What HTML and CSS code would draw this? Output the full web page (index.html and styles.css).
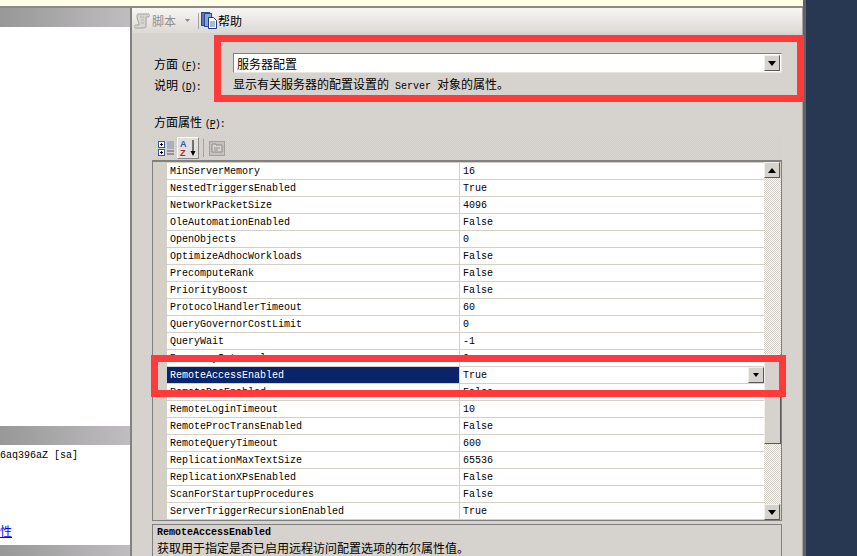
FILE: index.html
```html
<!DOCTYPE html>
<html lang="zh">
<head>
<meta charset="utf-8">
<title>方面属性</title>
<link rel="stylesheet" href="styles.css">
</head>
<body>
<div class="window">
  <div class="content">
    <div class="strip"></div>
    <div class="panes">
      <aside class="left">
        <div class="band band-top"></div>
        <div class="white white-a"></div>
        <div class="band band-mid"></div>
        <div class="white white-b">
          <div class="login">6aq396aZ [sa]</div>
          <a class="link" href="#">性</a>
        </div>
        <div class="band band-end"></div>
      </aside>
      <main class="right">
        <div class="toolbar">
          <svg class="ico-script" width="17" height="16" viewBox="0 0 17 16"><path d="M4 1h10c2 0 2 3 0 3h-2v9c0 2-1 2-2 2H2c-2 0-2-3 0-3h3v-1c0-2-2-4-2-7 0-2 0-3 1-3z" fill="#d8d6d2" stroke="#a4a29e"/><path d="M6 4h4M7 7h3M7 10h3" stroke="#b4b2ae"/></svg>
          <span class="tb-dim">脚本</span>
          <svg class="ico-drop" width="5" height="3" viewBox="0 0 5 3"><path d="M0 0h5L2.500 3z" fill="#8a8a8a"/></svg>
          <span class="tb-sep"></span>
          <svg class="ico-help" width="17" height="17" viewBox="0 0 17 17"><rect x="0.500" y="0.500" width="8" height="13" fill="#5a74b8" stroke="#2e4a8e"/><rect x="3.500" y="1.500" width="7" height="13" fill="#8aa2d8" stroke="#2e4a8e"/><path d="M7.500 5.500h5l3 3v8h-8z" fill="#fff" stroke="#1f3a7a"/><path d="M9 10h5M9 12h5M9 14h5" stroke="#5a74b8"/></svg>
          <span class="tb-text">帮助</span>
        </div>
        <section class="facet">
          <div class="facet-labels">
            <div class="lbl">方面 <span class="lat lat-tight">(<u>F</u>):</span></div>
            <div class="lbl">说明 <span class="lat lat-tight">(<u>D</u>):</span></div>
          </div>
          <div class="facet-fields">
            <div class="combo">
              <span class="combo-text">服务器配置</span>
              <span class="btn btn-combo"><i class="tri-down"></i></span>
            </div>
            <div class="desc">显示有关服务器的配置设置的<span class="lat"> Server </span>对象的属性。</div>
          </div>
        </section>
        <div class="props-label">方面属性 <span class="lat lat-tight">(<u>P</u>):</span></div>
        <div class="grid-tools">
          <svg class="tool" width="18" height="18" viewBox="0 0 18 18"><rect x="1.500" y="2.500" width="6" height="6" fill="#fff" stroke="#3c5a9a"/><path d="M3 5.500h3M4.500 4v3" stroke="#000"/><rect x="1.500" y="10.500" width="6" height="6" fill="#fff" stroke="#3c5a9a"/><path d="M3 13.500h3M4.500 12v3" stroke="#000"/><path d="M10 3h7M10 5h7M10 7h7M10 9h7" stroke="#7f8fb8"/><path d="M10 12h7M10 15h7" stroke="#555"/></svg>
          <span class="tool-on"><svg width="20" height="20" viewBox="0 0 20 20"><text class="az az-a" x="2" y="9">A</text><text class="az az-z" x="2" y="18">Z</text><path d="M15 2v13" stroke="#000"/><path d="M12.500 13h5L15 18z" fill="#000"/></svg></span>
          <span class="tool-sep"></span>
          <svg class="tool" width="16" height="16" viewBox="0 0 16 16"><rect x="0.500" y="1.500" width="15" height="14" fill="#c4c2be" stroke="#a2a09c"/><path d="M3 6V4h4v1h6v7H3z" fill="#d8d6d2" stroke="#8e8c88"/><path d="M5 8h6M5 10h4" stroke="#8e8c88"/></svg>
        </div>
        <div class="grid">
          <div class="rows">
            <div class="row"><span class="name">MinServerMemory</span><span class="val">16</span></div>
            <div class="row"><span class="name">NestedTriggersEnabled</span><span class="val">True</span></div>
            <div class="row"><span class="name">NetworkPacketSize</span><span class="val">4096</span></div>
            <div class="row"><span class="name">OleAutomationEnabled</span><span class="val">False</span></div>
            <div class="row"><span class="name">OpenObjects</span><span class="val">0</span></div>
            <div class="row"><span class="name">OptimizeAdhocWorkloads</span><span class="val">False</span></div>
            <div class="row"><span class="name">PrecomputeRank</span><span class="val">False</span></div>
            <div class="row"><span class="name">PriorityBoost</span><span class="val">False</span></div>
            <div class="row"><span class="name">ProtocolHandlerTimeout</span><span class="val">60</span></div>
            <div class="row"><span class="name">QueryGovernorCostLimit</span><span class="val">0</span></div>
            <div class="row"><span class="name">QueryWait</span><span class="val">-1</span></div>
            <div class="row"><span class="name">RecoveryInterval</span><span class="val">0</span></div>
            <div class="row row-sel"><span class="name">RemoteAccessEnabled</span><span class="val">True<span class="btn btn-cell"><i class="tri-small"></i></span></span></div>
            <div class="row"><span class="name">RemoteDacEnabled</span><span class="val">False</span></div>
            <div class="row"><span class="name">RemoteLoginTimeout</span><span class="val">10</span></div>
            <div class="row"><span class="name">RemoteProcTransEnabled</span><span class="val">False</span></div>
            <div class="row"><span class="name">RemoteQueryTimeout</span><span class="val">600</span></div>
            <div class="row"><span class="name">ReplicationMaxTextSize</span><span class="val">65536</span></div>
            <div class="row"><span class="name">ReplicationXPsEnabled</span><span class="val">False</span></div>
            <div class="row"><span class="name">ScanForStartupProcedures</span><span class="val">False</span></div>
            <div class="row"><span class="name">ServerTriggerRecursionEnabled</span><span class="val">True</span></div>
          </div>
          <div class="scrollbar">
            <span class="btn btn-sb"><i class="tri-up"></i></span>
            <span class="track track-a"></span>
            <span class="thumb"></span>
            <span class="track track-b"></span>
            <span class="btn btn-sb"><i class="tri-down"></i></span>
          </div>
        </div>
        <div class="help-box">
          <div class="help-title">RemoteAccessEnabled</div>
          <div class="help-text">获取用于指定是否已启用远程访问配置选项的布尔属性值。</div>
        </div>
      </main>
    </div>
  </div>
  <div class="edge"></div>
  <div class="navy"></div>
</div>
<div class="callout callout-a"></div>
<div class="callout callout-b"></div>
</body>
</html>
```

FILE: styles.css
```css
* { box-sizing: border-box; }
html, body { margin: 0; padding: 0; }
body {
  width: 857px;
  height: 556px;
  overflow: hidden;
  position: relative;
  font: 12px/17px "Liberation Mono", "Noto Sans CJK SC", monospace;
  color: #000;
  background: #283853;
}
u { text-decoration: underline; }
.lat { font: 10px/17px "Liberation Mono", monospace; }
.lat-tight { letter-spacing: -1px; }

.window { display: flex; width: 857px; height: 556px; }
.content { width: 803px; height: 556px; display: flex; flex-direction: column; }
.edge { width: 3px; background: #5f6368; }
.navy { flex: 1; background: #283853; }

.strip { height: 8px; background: #fffde6; border-bottom: 2px solid #8c8a88; }
.panes { flex: 1; display: flex; min-height: 0; }

.left { width: 130px; display: flex; flex-direction: column; background: #fff; }
.band { background: linear-gradient(90deg, #989898, #c0bdc0); }
.band-top { height: 19px; }
.white { background: #fff; }
.white-a { height: 399px; }
.band-mid { height: 19px; }
.white-b { height: 100px; display: flex; flex-direction: column; justify-content: space-between; font-size: 10px; padding-top: 2px; }
.band-end { flex: 1; }
.login { line-height: 17px; }
.link {
  color: #0000ff;
  font: 12px/16px "Noto Sans CJK SC", sans-serif;
  margin-bottom: 6px;
}

.right {
  width: 673px;
  display: flex;
  flex-direction: column;
  background: #d6d3ce;
  border-left: 2px solid #828282;
  border-right: 1px solid #a5a3a0;
}

.toolbar {
  height: 25px;
  display: flex;
  align-items: center;
  padding-left: 2px;
  background: linear-gradient(180deg, #f8f6f5, #dcd9d4);
  font: 12px/17px "Noto Sans CJK SC", sans-serif;
}
.tb-dim { color: #8f8f8f; margin-left: 1px; }
.ico-drop { margin-left: 9px; }
.tb-sep { width: 1px; height: 16px; background: #a5a3a0; margin: 0 2px 0 8px; }

.facet { height: 75px; display: flex; padding: 20px 20px 0 22px; }
.facet-labels { width: 79px; padding-top: 2px; }
.lbl { height: 21px; line-height: 17px; font-family: "Noto Sans CJK SC", sans-serif; }
.facet-fields { flex: 1; }
.combo {
  height: 20px;
  display: flex;
  align-items: center;
  justify-content: space-between;
  background: #fff;
  border: 1px solid #808080;
  border-bottom-color: #e8e6e2;
  border-right-color: #e8e6e2;
  padding: 0 1px 0 3px;
}
.combo-text { font-family: "Noto Sans CJK SC", sans-serif; }
.desc { margin-top: 2px; font-family: "Noto Sans CJK SC", sans-serif; line-height: 17px; }

.props-label { height: 23px; padding-left: 22px; padding-top: 7px; line-height: 14px; font-family: "Noto Sans CJK SC", sans-serif; }
.grid-tools {
  height: 25px;
  margin: 4px 20px 0 21px;
  display: flex;
  align-items: center;
  padding-left: 4px;
  gap: 2px;
  background: repeating-conic-gradient(#d2cfca 0 25%, #d8d5d0 0 50%) 0 0 / 2px 2px;
}
.tool-on {
  display: flex;
  width: 22px;
  height: 22px;
  align-items: center;
  justify-content: center;
  background: #e2e0dc;
  border: 1px solid #fff;
  border-right-color: #8a8a8a;
  border-bottom-color: #8a8a8a;
}
.az { font: bold 9px "Liberation Sans", sans-serif; }
.az-a { fill: #2f55b5; }
.az-z { fill: #a03030; }
.tool-sep { width: 1px; height: 18px; background: #a5a3a0; margin: 0 3px 0 2px; }

.grid {
  margin-left: 20px;
  width: 630px;
  height: 361px;
  border: 1px solid #808080;
  border-top: 2px solid #808080;
  display: flex;
  background: #d4d0c8;
}
.rows { width: 612px; }
.row {
  height: 17px;
  display: flex;
  font-size: 10px;
  line-height: 16px;
  padding-left: 14px;
}
.name {
  width: 292px;
  padding: 1px 0 0 3px;
  background: #fff;
  border-top: 1px solid #d4d0c8;
  white-space: nowrap;
  overflow: hidden;
}
.val {
  flex: 1;
  display: flex;
  justify-content: space-between;
  padding: 1px 0 0 3px;
  background: #fff;
  border-top: 1px solid #d4d0c8;
  border-left: 1px solid #d4d0c8;
}
.row-sel .name { background: #0a246a; color: #fff; }

.btn {
  display: flex;
  align-items: center;
  justify-content: center;
  background: #d6d3ce;
  border: 1px solid;
  border-color: #f2f0ec #5a5a5a #5a5a5a #f2f0ec;
}
.btn-combo { width: 16px; height: 16px; }
.btn-cell { width: 16px; height: 16px; margin-top: -1px; }
.btn-sb { width: 16px; height: 16px; flex: none; }
.tri-down { width: 0; height: 0; border: 4px solid transparent; border-top: 5px solid #000; border-bottom: 0; }
.tri-up { width: 0; height: 0; border: 4px solid transparent; border-bottom: 5px solid #000; border-top: 0; }
.tri-small { width: 0; height: 0; border: 3px solid transparent; border-top: 4px solid #000; border-bottom: 0; }

.scrollbar { width: 17px; display: flex; flex-direction: column; }
.track { background: repeating-conic-gradient(#fff 0 25%, #d4d0c8 0 50%) 0 0 / 2px 2px; }
.track-a { height: 176px; }
.thumb {
  height: 90px;
  background: #d6d3ce;
  border: 1px solid;
  border-color: #f2f0ec #5a5a5a #5a5a5a #f2f0ec;
  flex: none;
}
.track-b { flex: 1; }

.help-box {
  margin-top: 3px;
  margin-left: 20px;
  width: 630px;
  flex: 1;
  border: 1px solid #808080;
  border-bottom: 0;
  padding: 1px 0 0 4px;
}
.help-title { font: bold 10px/14px "Liberation Mono", monospace; }
.help-text { font: 12px/15px "Noto Sans CJK SC", sans-serif; }

.callout { position: absolute; border: 7px solid #ff3a3a; pointer-events: none; }
.callout-a { left: 214px; top: 35px; width: 590px; height: 67px; }
.callout-b { left: 151px; top: 355px; width: 635px; height: 42px; }
```
